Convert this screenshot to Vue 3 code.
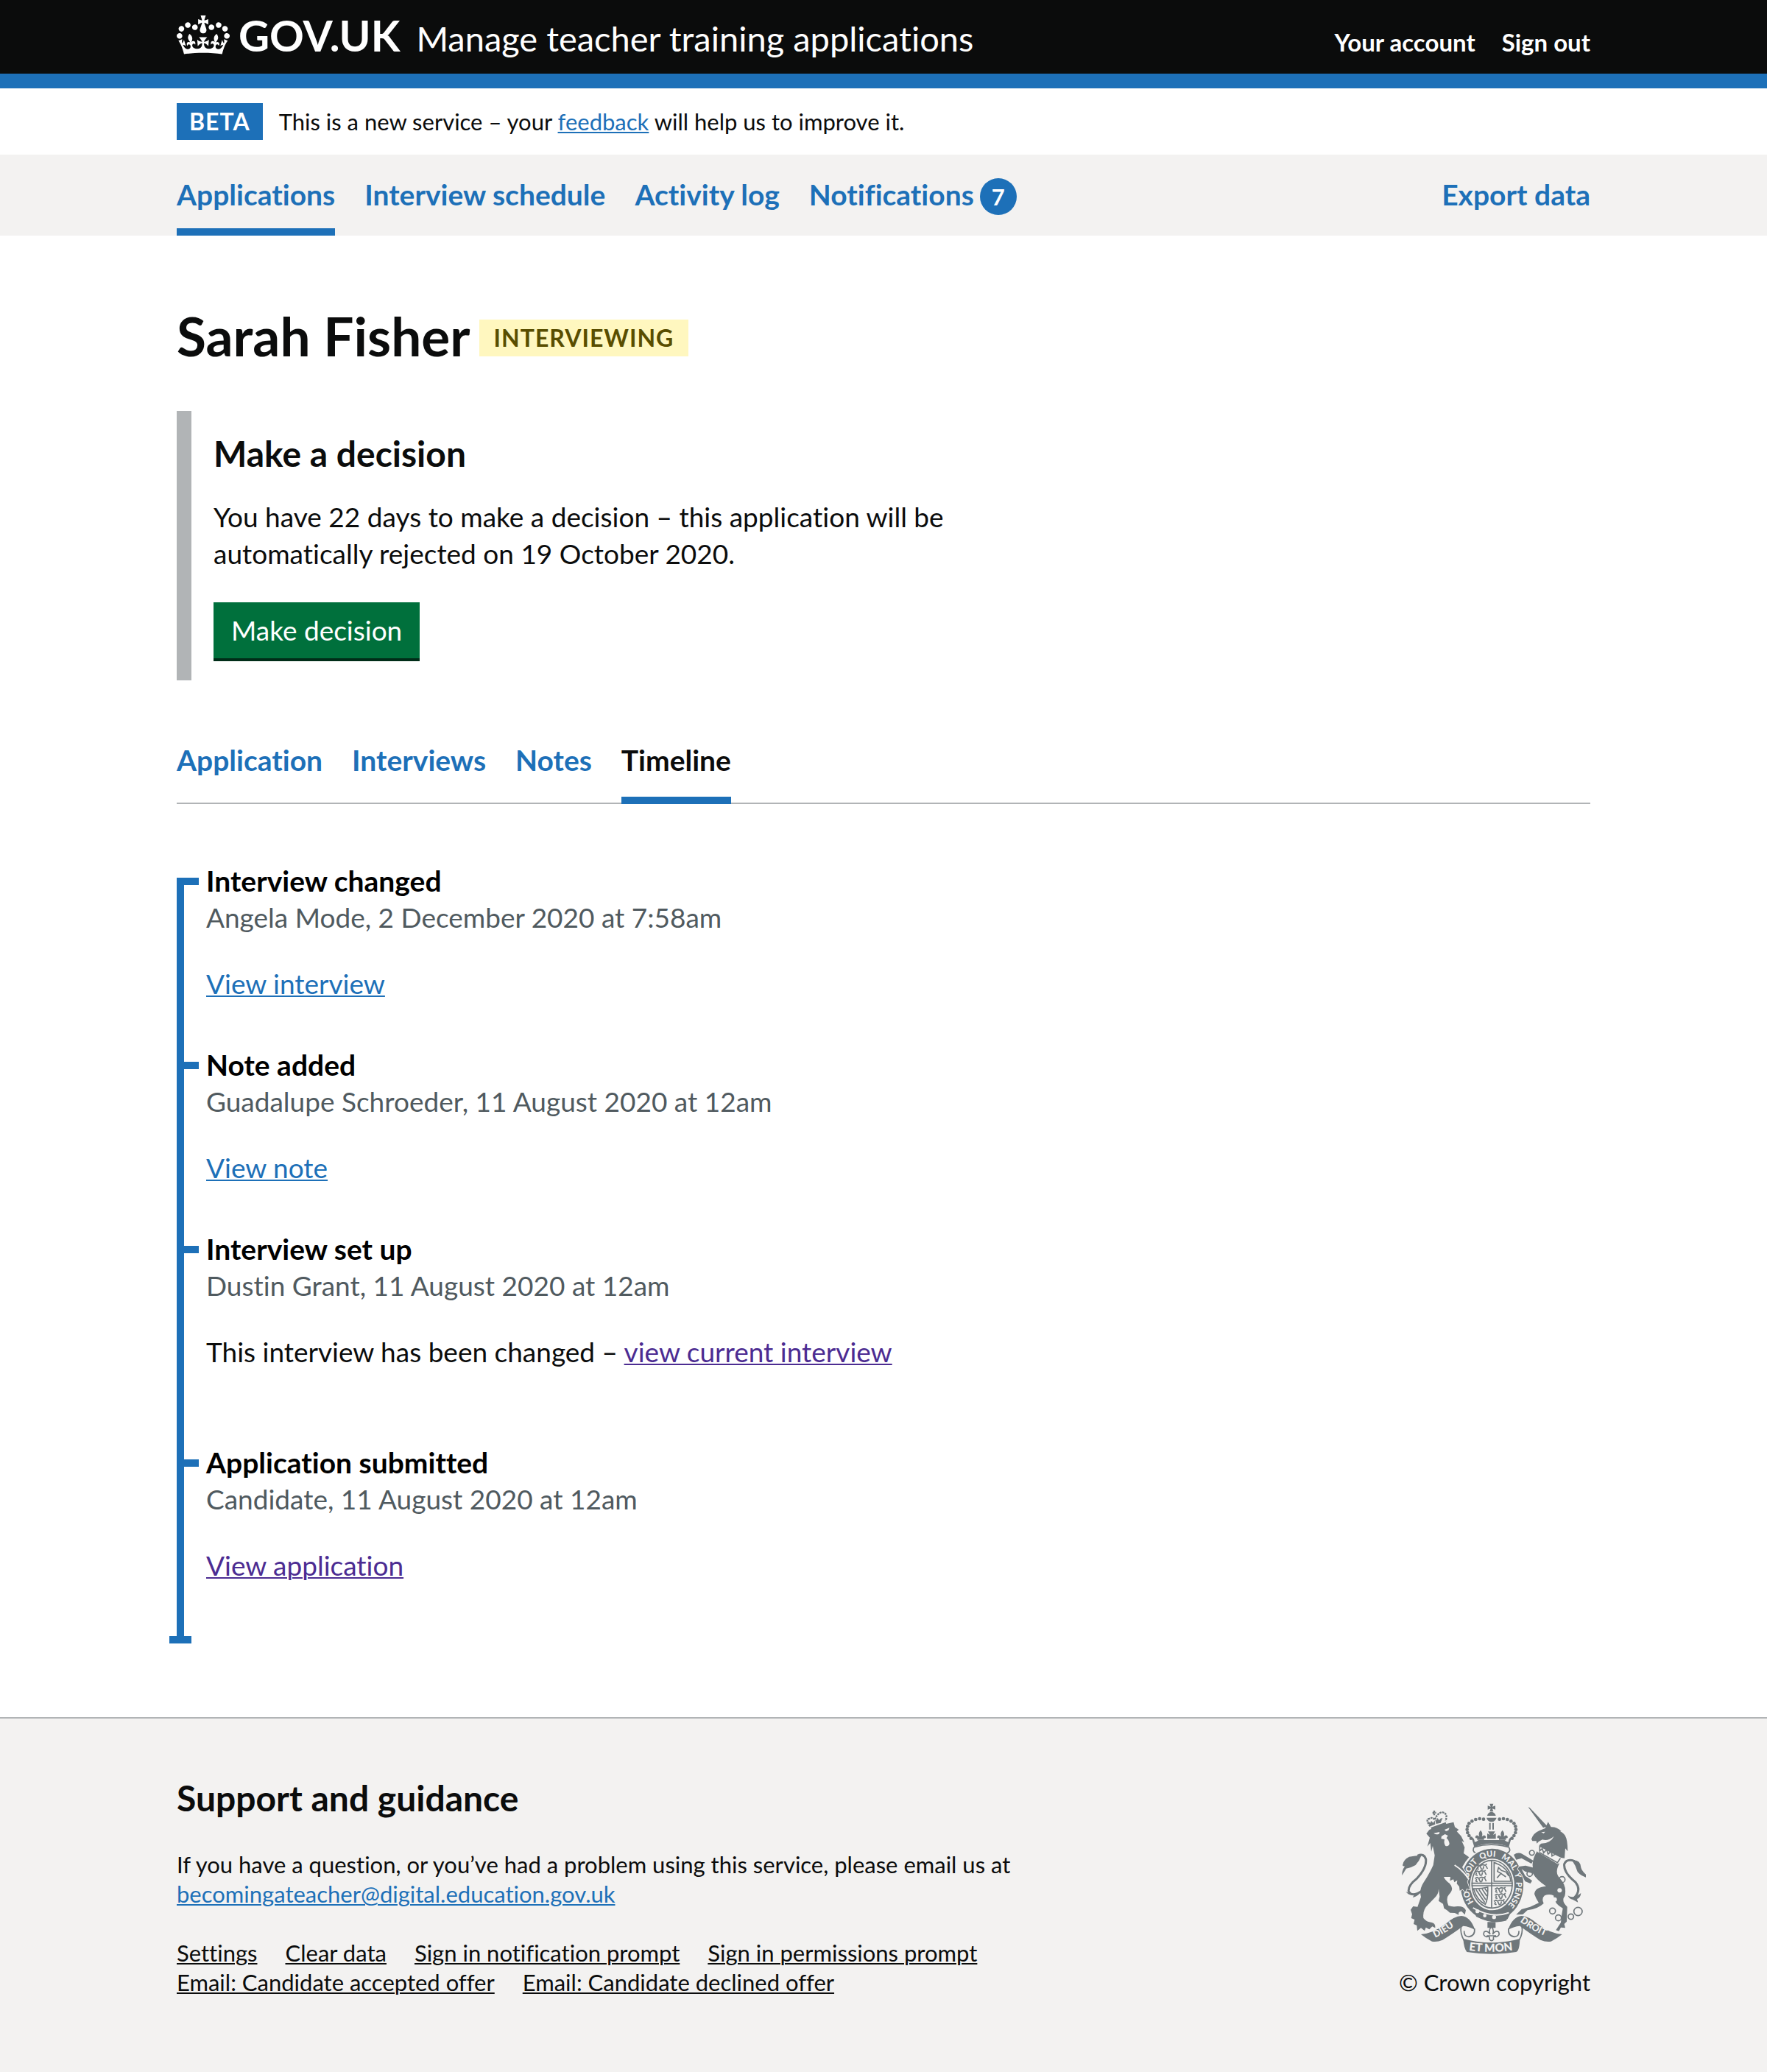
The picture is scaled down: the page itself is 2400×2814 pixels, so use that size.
<script setup>
const navItems = [
  { label: 'Applications', current: true },
  { label: 'Interview schedule' },
  { label: 'Activity log' },
  { label: 'Notifications', count: 7 },
]

const tabs = [
  { label: 'Application' },
  { label: 'Interviews' },
  { label: 'Notes' },
  { label: 'Timeline', current: true },
]

const events = [
  { title: 'Interview changed', meta: 'Angela Mode, 2 December 2020 at 7:58am', link: 'View interview' },
  { title: 'Note added', meta: 'Guadalupe Schroeder, 11 August 2020 at 12am', link: 'View note' },
  {
    title: 'Interview set up',
    meta: 'Dustin Grant, 11 August 2020 at 12am',
    lead: 'This interview has been changed – ',
    link: 'view current interview',
    visited: true,
    roomy: true,
  },
  { title: 'Application submitted', meta: 'Candidate, 11 August 2020 at 12am', link: 'View application', visited: true },
]

const footerLinks = [
  'Settings',
  'Clear data',
  'Sign in notification prompt',
  'Sign in permissions prompt',
  'Email: Candidate accepted offer',
  'Email: Candidate declined offer',
]

// Pearls along the left arch of the royal crown; the right arch mirrors them.
const pearls = [
  [405, 153], [389, 151], [373, 154], [358, 161], [346, 170],
  [340, 182], [338, 195], [340, 208], [346, 220], [354, 231],
]
</script>

<template>
  <div class="page">
    <header class="header">
      <div class="container header-row">
        <a class="logo" href="#">
          <svg class="crown" viewBox="0 0 132 97" aria-hidden="true">
            <path
              fill="currentColor"
              fill-rule="evenodd"
              d="M25 30.2c3.5 1.5 7.7-.2 9.1-3.7 1.5-3.6-.2-7.8-3.9-9.2-3.6-1.4-7.6.3-9.1 3.9-1.4 3.5.3 7.5 3.9 9zM9 39.5c3.6 1.5 7.8-.2 9.2-3.7 1.5-3.6-.2-7.8-3.9-9.1-3.6-1.5-7.6.2-9.1 3.8-1.4 3.5.3 7.5 3.8 9zM4.4 57.2c3.5 1.5 7.7-.2 9.1-3.8 1.5-3.6-.2-7.7-3.9-9.1-3.5-1.5-7.6.3-9.1 3.8-1.4 3.5.3 7.6 3.9 9.1zm38.3-21.4c3.5 1.5 7.7-.2 9.1-3.8 1.5-3.6-.2-7.7-3.9-9.1-3.6-1.5-7.6.3-9.1 3.8-1.3 3.6.4 7.7 3.9 9.1zm64.4-5.6c-3.6 1.5-7.8-.2-9.1-3.7-1.5-3.6.2-7.8 3.8-9.2 3.6-1.4 7.7.3 9.2 3.9 1.3 3.5-.4 7.5-3.9 9zm15.9 9.3c-3.6 1.5-7.7-.2-9.1-3.7-1.5-3.6.2-7.8 3.7-9.1 3.6-1.5 7.7.2 9.2 3.8 1.5 3.5-.3 7.5-3.8 9zm4.7 17.7c-3.6 1.5-7.8-.2-9.2-3.8-1.5-3.6.2-7.7 3.9-9.1 3.6-1.5 7.7.3 9.2 3.8 1.3 3.5-.4 7.6-3.9 9.1zM89.3 35.8c-3.6 1.5-7.8-.2-9.2-3.8-1.4-3.6.2-7.7 3.9-9.1 3.6-1.5 7.7.3 9.2 3.8 1.4 3.6-.3 7.7-3.9 9.1zM69.7 17.7l8.9 4.7V9.3l-8.9 2.8c-.2-.3-.5-.6-.9-.9L72.4 0H59.6l3.5 11.2c-.3.3-.6.5-.9.9l-8.8-2.8v13.1l8.8-4.7c.3.3.6.7.9.9l-5 15.4v.1c-.2.8-.4 1.6-.4 2.4 0 4.1 3.1 7.5 7 8.1h.2c.3 0 .7.1 1 .1.4 0 .7 0 1-.1h.2c4-.6 7.1-4.1 7.1-8.1 0-.8-.1-1.7-.4-2.4V34l-5.1-15.4c.4-.2.7-.6 1-.9zM66 92.8c16.9 0 32.8 1.1 47.1 3.2 4-16.9 8.9-26.7 14-33.5l-9.6-3.4c1 4.9 1.1 7.2 0 10.2-1.5-1.4-3-4.3-4.2-8.7L108.6 76c2.8-2 5-3.2 7.5-3.3-4.4 9.4-10 11.9-13.6 11.2-4.3-.8-6.3-4.6-5.6-7.9 1-4.7 5.7-5.9 8-.5 4.3-8.7-3-11.4-7.6-8.8 7.1-7.2 7.9-13.5 2.1-21.1-8 6.1-8.1 12.3-4.5 20.8-4.7-5.4-12.1-2.5-9.5 6.2 3.4-5.2 7.9-2 7.2 3.1-.6 4.3-6.4 7.8-13.5 7.2-10.3-.9-10.9-8-11.2-13.8 2.5-.5 7.1 1.8 11 7.3L80.2 60c-4.1 4.4-8 5.3-12.3 5.4 1.4-4.4 8-11.6 8-11.6H55.5s6.4 7.2 7.9 11.6c-4.2-.1-8-1-12.3-5.4l1.4 16.4c3.9-5.5 8.5-7.7 10.9-7.3-.3 5.8-.9 12.8-11.1 13.8-7.2.6-12.9-2.9-13.5-7.2-.7-5 3.8-8.3 7.1-3.1 2.7-8.7-4.6-11.6-9.4-6.2 3.7-8.5 3.6-14.7-4.6-20.8-5.8 7.6-5 13.9 2.2 21.1-4.7-2.6-11.9.1-7.7 8.8 2.3-5.5 7.1-4.2 8.1.5.7 3.3-1.3 7.1-5.7 7.9-3.5.7-9-1.8-13.5-11.2 2.5.1 4.7 1.3 7.5 3.3l-4.7-15.4c-1.2 4.4-2.7 7.2-4.3 8.7-1.1-3-.9-5.3 0-10.2l-9.5 3.4c5 6.9 9.9 16.7 14 33.5 14.8-2.1 30.8-3.2 47.7-3.2z"
            />
          </svg>
          <span class="logo-text">GOV.UK</span>
        </a>
        <a class="service" href="#">Manage teacher training applications</a>
        <nav class="account" aria-label="Account">
          <a href="#">Your account</a>
          <a href="#">Sign out</a>
        </nav>
      </div>
    </header>

    <div class="container phase">
      <strong class="phase-tag">BETA</strong>
      <span>This is a new service – your <a class="link" href="#">feedback</a> will help us to improve it.</span>
    </div>

    <nav class="primary" aria-label="Primary">
      <div class="container primary-row">
        <a
          v-for="item in navItems"
          :key="item.label"
          class="primary-link"
          :class="{ current: item.current }"
          href="#"
        >{{ item.label }}<span v-if="item.count" class="badge">{{ item.count }}</span></a>
        <a class="primary-link export" href="#">Export data</a>
      </div>
    </nav>

    <main class="container main">
      <div class="title">
        <h1>Sarah Fisher</h1>
        <strong class="status">INTERVIEWING</strong>
      </div>

      <section class="inset">
        <h2>Make a decision</h2>
        <p>You have 22 days to make a decision – this application will be automatically rejected on 19 October 2020.</p>
        <button type="button" class="button">Make decision</button>
      </section>

      <nav class="tabs" aria-label="Application sections">
        <a v-for="tab in tabs" :key="tab.label" class="tab" :class="{ current: tab.current }" href="#">{{ tab.label }}</a>
      </nav>

      <ol class="timeline">
        <li v-for="event in events" :key="event.title" class="event" :class="{ roomy: event.roomy }">
          <h2>{{ event.title }}</h2>
          <p class="meta">{{ event.meta }}</p>
          <p class="detail">{{ event.lead }}<a class="link" :class="{ visited: event.visited }" href="#">{{ event.link }}</a></p>
        </li>
      </ol>
    </main>

    <footer class="footer">
      <div class="container footer-row">
        <div class="support">
          <h2>Support and guidance</h2>
          <p>
            If you have a question, or you’ve had a problem using this service, please email us at
            <a class="link" href="#">becomingateacher@digital.education.gov.uk</a>
          </p>
          <ul class="footer-links">
            <li v-for="label in footerLinks" :key="label"><a href="#">{{ label }}</a></li>
          </ul>
        </div>

        <a class="copyright" href="#">
          <svg class="crest" viewBox="72 88 750 615" aria-hidden="true">
            <defs>
              <path id="garter-line" d="M365 491A98 113 0 1 1 486 518" />
              <path id="dieu-line" d="M208 636Q252 616 312 570" />
              <path id="droit-line" d="M553 570Q604 608 674 637" />
              <path id="mon-line" d="M345 687Q437 701 540 685" />
              <g id="pearl-arch">
                <circle v-for="[x, y] in pearls" :key="`${x}-${y}`" :cx="x" :cy="y" r="7" />
              </g>
              <g id="ribbon">
                <path d="M150 622Q200 618 250 580Q285 548 315 547Q352 550 370 604Q348 590 322 588Q276 622 238 645Q215 655 195 651Q172 640 150 622Z" />
                <path class="line" d="M368 598Q372 628 345 632Q324 630 326 608M314 588Q308 618 326 648" />
              </g>
              <g id="fleur">
                <path d="M0-22Q11-10 5 4Q18-8 22 6Q20 12 14 10L14 17H-14V10Q-20 12-22 6Q-18-8-5 4Q-11-10 0-22Z" />
              </g>
              <path id="beast" class="line" d="M3 8l9-5 7 4 10-5 12 3 5-6M10 10l-4 9M19 9l5 10M34 8l-3 12M43 7l6 12M6 19l8 2M22 20l9 1" />
            </defs>

            <g class="ink">
              <!-- Royal crown -->
              <path d="M430 90h15l-4 12 12-4v16l-12-4 4 12h-15l4-12-12 4V98l12 4ZM420 139q2-14 17-16 15 2 18 16ZM417 147h41q-5 16-20 17-17-1-21-17Z" />
              <path d="M428 168h6v27h-6zM441 168h6v27h-6z" />
              <use href="#pearl-arch" />
              <use href="#pearl-arch" transform="matrix(-1 0 0 1 875 0)" />
              <path d="M356 228Q366 226 369 246Q379 244 384 238H491Q496 244 506 246Q509 226 519 228L508 266Q437 238 367 266Z" />
              <use href="#fleur" x="393" y="220" />
              <use href="#fleur" x="482" y="220" />
              <path d="M423 203h29l-8 14 11-6v22h-35v-22l11 6Z" />
              <path class="line" d="M366 267Q358 285 372 290M508 267Q518 285 502 290M366 267Q437 246 508 267" />

              <!-- Garter -->
              <path fill-rule="evenodd" d="M440 273A128 147 0 1 1 439 273ZM440 314A90 105 0 1 0 441 314Z" />
              <ellipse class="line" cx="440" cy="418" rx="82" ry="97" />
              <path class="line" d="M438 322V516M356 414H524M356 424H524" />
              <use href="#beast" x="372" y="336" />
              <use href="#beast" x="367" y="361" />
              <use href="#beast" x="367" y="387" />
              <use href="#beast" x="448" y="430" />
              <use href="#beast" x="448" y="455" />
              <use href="#beast" x="444" y="480" />
              <path class="line" d="M448 330V406H516Q510 350 448 330ZM460 392l16-18-14-8 4-16 12 12 18 6 12 16M476 374l20 14M364 436Q392 438 422 430Q424 478 412 500Q378 484 364 436ZM374 440l36 52M386 439l28 42M399 437l19 29M410 435l10 14" />
              <path d="M366 520Q440 566 518 530L500 566Q440 584 375 550Z" />
            </g>
            <g class="paper">
              <circle cx="380" cy="528" r="8" />
              <circle cx="410" cy="546" r="7" />
              <circle cx="448" cy="552" r="8" />
              <path class="gap" d="M362 514Q440 560 508 534M499 566L552 535" />
            </g>
            <g class="motto garter-text">
              <text><textPath href="#garter-line">HO</textPath></text>
              <text><textPath href="#garter-line" startOffset="105">SOIT</textPath></text>
              <text><textPath href="#garter-line" startOffset="195">QUI</textPath></text>
              <text><textPath href="#garter-line" startOffset="280">MAL</textPath></text>
              <text><textPath href="#garter-line" startOffset="364">Y</textPath></text>
              <text><textPath href="#garter-line" startOffset="400">PENSE</textPath></text>
            </g>

            <!-- Lion -->
            <g class="ink">
              <path class="edge" d="M184 196L236 176L283 165L288 185L304 196L296 203L314 222L326 247L316 242L328 268L324 292L346 308L332 325L318 348L330 366L343 395L338 408L349 440L336 436L330 450L320 438L308 444L306 428L296 416L298 402L286 410L282 398L268 404L270 388L243 388Q248 402 266 414Q288 436 264 460Q250 474 262 505Q280 512 298 508Q324 506 333 524L329 542L315 528Q300 530 304 543L288 535L268 534L256 524L244 516L240 498L222 486L226 468L222 437Q222 460 205 474L178 502Q156 522 160 556Q172 572 194 574Q210 578 208 596L196 590L184 602L170 594L165 608L150 596L135 608L133 586L120 580L124 562L110 556L114 540L108 522L118 508L136 510L150 470Q142 440 160 412Q184 376 200 340L206 300L198 262L192 285L188 250L176 264L186 228L172 212Z" />
              <path d="M190 187L251 165L253 173L194 196ZM178 160l10 22 20-8-2-16-6 10-8-8-4 8ZM208 157l4 15 18-4 8-20-8 2-6 8-6-10-6 10Z" />
              <path class="pearl-line" d="M188 182Q166 154 184 151Q196 142 207 156Q214 130 236 124Q262 130 250 160M204 118V140M197 127h15" />
              <path class="line thick" d="M154 445Q116 472 100 448Q96 424 132 396Q174 352 170 316Q162 290 136 302" />
              <path d="M152 300Q144 322 128 340Q108 352 90 354L73 382Q72 360 84 345Q72 344 76 338Q78 318 102 306Q126 302 152 300ZM88 448Q108 462 146 452Q138 468 116 472L122 462Q102 466 88 448Z" />
            </g>
            <path class="paper" d="M202 210l24-5-2 8q-14 5-22-3ZM246 196l20-8-4 10-10 4ZM234 222l14-8 12 6-6 10q10 8 12 24-4 12-16 8-8-10-4-26l-14-4Z" />
            <path class="gap" d="M287 340Q322 362 345 398" />

            <!-- Unicorn -->
            <g class="ink">
              <path d="M587 104L593 106L665 182L648 188ZM600 234Q608 210 632 200L656 190L668 164L680 185Q704 184 722 202L717 202Q736 212 740 226Q747 236 748 284L738 272L735 312L720 310Q690 300 668 284L630 266Q632 256 640 252Q680 250 692 222Q668 244 645 236L630 244L622 252L620 242L604 242Z" />
              <path class="edge" d="M624 282L714 334Q694 370 714 392Q746 424 736 466Q720 486 746 510L744 570L734 580L738 596L720 594L712 609L700 605L720 574Q722 546 728 516Q694 500 690 464Q672 456 654 464Q640 476 650 496Q628 518 584 524L565 541L538 542L560 520L595 510L630 494Q618 476 612 458Q614 430 660 426Q622 402 606 374L574 366L560 356L575 384L590 394L603 404L596 415L574 406Q562 376 544 356L550 346L576 342L606 350Q600 320 624 282Z" />
              <path d="M528 298Q545 286 562 294L608 322L600 334L560 312L538 318ZM765 320Q800 316 802 350Q804 362 822 378V390Q802 384 788 368Q782 344 765 320ZM748 464Q770 480 802 454Q800 474 786 478L790 492L768 480Q756 480 748 464Z" />
              <path class="line thick" d="M772 476Q806 444 780 410Q730 370 734 336Q744 312 776 324" />
              <circle class="line" cx="602" cy="290" r="10" />
              <circle class="line" cx="593" cy="375" r="11" />
              <circle class="line" cx="725" cy="399" r="12" />
              <circle class="line" cx="686" cy="527" r="12" />
              <circle class="line" cx="710" cy="555" r="12" />
              <circle class="line" cx="761" cy="550" r="11" />
              <circle class="line" cx="790" cy="529" r="17" />
            </g>
            <g class="paper">
              <path d="M628 262L724 312L708 336L624 286Z" />
              <circle cx="715" cy="443" r="9" />
              <circle cx="695" cy="480" r="9" />
              <path d="M640 206l16-2-6 7Z" />
            </g>
            <path class="line" d="M632 288L706 330L718 312M634 264v18l10-9 6 17 12-13 6 18 14-12 2 20 14-8" />

            <!-- Scroll -->
            <g class="ink">
              <use href="#ribbon" />
              <use href="#ribbon" transform="matrix(-1 0 0 1 875 0)" />
              <path d="M322 640Q437 672 553 640Q552 688 538 694Q437 710 337 694Q325 680 322 640ZM421 572h33v24h-33Z" />
              <path class="line" d="M437 590Q450 606 442 622Q454 604 466 612Q474 628 456 632Q442 628 446 642Q438 654 429 642Q432 628 418 632Q400 628 408 612Q420 604 432 622Q424 606 437 590ZM418 628H456" />
            </g>
            <g class="motto">
              <text><textPath href="#dieu-line">DIEU</textPath></text>
              <text><textPath href="#droit-line">DROIT</textPath></text>
              <text class="mon"><textPath href="#mon-line">ET MON</textPath></text>
            </g>
          </svg>
          <span>© Crown copyright</span>
        </a>
      </div>
    </footer>
  </div>
</template>

<style>
body {
  margin: 0;
  background: #ffffff;
}
</style>

<style scoped>
.page {
  font-family: Lato, "Liberation Sans", sans-serif;
  font-size: 37px;
  line-height: 50px;
  font-variant-ligatures: none;
  color: #0b0c0c;
}

h1,
h2,
p,
ul,
ol {
  margin: 0;
  padding: 0;
}

ul,
ol {
  list-style: none;
}

.container {
  box-sizing: border-box;
  width: 80%;
  max-width: 1920px;
  margin: 0 auto;
}

.link {
  color: #1d70b8;
  text-decoration: underline 2px;
  text-underline-offset: 2px;
}

.link.visited {
  color: #4c2c92;
}

/* Header */
.header {
  background: #0b0c0c;
  border-bottom: 20px solid #1d70b8;
}

.header-row {
  display: flex;
  align-items: baseline;
  height: 100px;
  padding-top: 18px;
}

.header a {
  color: #ffffff;
  text-decoration: none;
}

.logo {
  display: flex;
  align-items: baseline;
  gap: 12px;
}

.crown {
  align-self: flex-start;
  width: 72px;
  height: 53px;
  margin-top: 3px;
}

.logo-text {
  font-size: 58px;
  font-weight: 700;
  line-height: 60px;
}

.service {
  margin-left: 22px;
  font-size: 47px;
}

.account {
  display: flex;
  gap: 36px;
  margin-left: auto;
  font-size: 33px;
  font-weight: 700;
}

/* Phase banner */
.phase {
  display: flex;
  gap: 22px;
  padding: 20px 0;
  font-size: 31px;
}

.phase-tag,
.status {
  font-size: 32px;
  font-weight: 700;
  letter-spacing: 1px;
}

.phase-tag {
  padding: 0 17px;
  background: #1d70b8;
  color: #ffffff;
}

/* Primary navigation */
.primary {
  background: #f3f2f1;
}

.primary-row {
  display: flex;
  gap: 40px;
  height: 110px;
}

.primary-link {
  box-sizing: border-box;
  display: flex;
  align-items: baseline;
  padding-top: 29px;
  font-size: 39px;
  font-weight: 700;
  color: #1d70b8;
  text-decoration: none;
}

.primary-link.current {
  border-bottom: 10px solid #1d70b8;
}

.export {
  margin-left: auto;
}

.badge {
  width: 50px;
  height: 50px;
  margin-left: 8px;
  border-radius: 50%;
  background: #1d70b8;
  color: #ffffff;
  font-size: 31px;
  text-align: center;
}

/* Page title */
.main {
  padding-top: 96px;
}

.title {
  display: flex;
  align-items: flex-start;
  gap: 12px;
}

h1 {
  font-size: 73px;
  font-weight: 700;
  line-height: 80px;
}

.status {
  margin-top: 18px;
  padding: 0 20px;
  background: #fff7bf;
  color: #594d00;
}

/* Decision inset */
.inset {
  margin-top: 62px;
  padding: 28px 0 26px 30px;
  border-left: 20px solid #b1b4b6;
}

.inset h2,
.support h2 {
  font-size: 48px;
  font-weight: 700;
  line-height: 60px;
}

.inset p {
  max-width: 1040px;
  margin-top: 31px;
}

.button {
  display: block;
  margin: 41px 0 4px;
  padding: 13px 24px;
  border: 0;
  background: #00703c;
  box-shadow: 0 4px 0 #002d18;
  color: #ffffff;
  font: inherit;
}

/* Section tabs */
.tabs {
  display: flex;
  gap: 40px;
  margin-top: 83px;
  border-bottom: 2px solid #b1b4b6;
}

.tab {
  margin-bottom: -2px;
  padding-bottom: 25px;
  border-bottom: 10px solid transparent;
  font-size: 39px;
  font-weight: 700;
  color: #1d70b8;
  text-decoration: none;
}

.tab.current {
  border-bottom-color: #1d70b8;
  color: #0b0c0c;
}

/* Timeline */
.timeline {
  position: relative;
  margin-top: 79px;
  padding-bottom: 21px;
}

.timeline::before,
.timeline::after,
.event::before {
  content: "";
  position: absolute;
  background: #1d70b8;
}

.timeline::before {
  top: 21px;
  bottom: 0;
  left: 0;
  width: 10px;
}

.timeline::after {
  bottom: 0;
  left: -10px;
  width: 30px;
  height: 10px;
}

.event {
  position: relative;
  padding: 0 0 60px 40px;
}

.event::before {
  top: 21px;
  left: 0;
  width: 30px;
  height: 10px;
}

.event.roomy {
  padding-bottom: 100px;
}

.event h2 {
  font-size: 39px;
  font-weight: 700;
  line-height: 50px;
  color: #000000;
}

.meta {
  color: #505a5f;
}

.detail {
  margin-top: 40px;
}

/* Footer */
.footer {
  margin-top: 100px;
  padding: 78px 0 102px;
  border-top: 2px solid #b1b4b6;
  background: #f3f2f1;
  font-size: 31px;
  line-height: 40px;
}

.footer-row {
  display: flex;
  align-items: flex-end;
  justify-content: space-between;
}

.support {
  max-width: 1200px;
}

.support p {
  margin-top: 40px;
}

.footer-links {
  display: flex;
  flex-wrap: wrap;
  column-gap: 38px;
  margin-top: 40px;
}

.footer-links a {
  color: #0b0c0c;
  text-decoration: underline 2px;
  text-underline-offset: 2px;
}

.copyright {
  display: flex;
  flex-direction: column;
  align-items: flex-end;
  gap: 18px;
  color: #0b0c0c;
  text-decoration: none;
}

.crest {
  width: 250px;
  height: 205px;
  margin-right: 6px;
}

.ink {
  fill: #6f777b;
}

.line {
  fill: none;
  stroke: #6f777b;
  stroke-width: 5px;
}

.thick {
  stroke-width: 9px;
}

.pearl-line {
  fill: none;
  stroke: #6f777b;
  stroke-width: 7px;
  stroke-dasharray: 8 3;
}

.edge {
  stroke: #f3f2f1;
  stroke-width: 5px;
  paint-order: stroke;
}

.paper,
.motto {
  fill: #f3f2f1;
}

.gap {
  fill: none;
  stroke: #f3f2f1;
  stroke-width: 6px;
}

.motto {
  font-size: 38px;
  font-weight: 900;
}

.garter-text {
  font-size: 33px;
}

.mon {
  font-size: 46px;
}
</style>
